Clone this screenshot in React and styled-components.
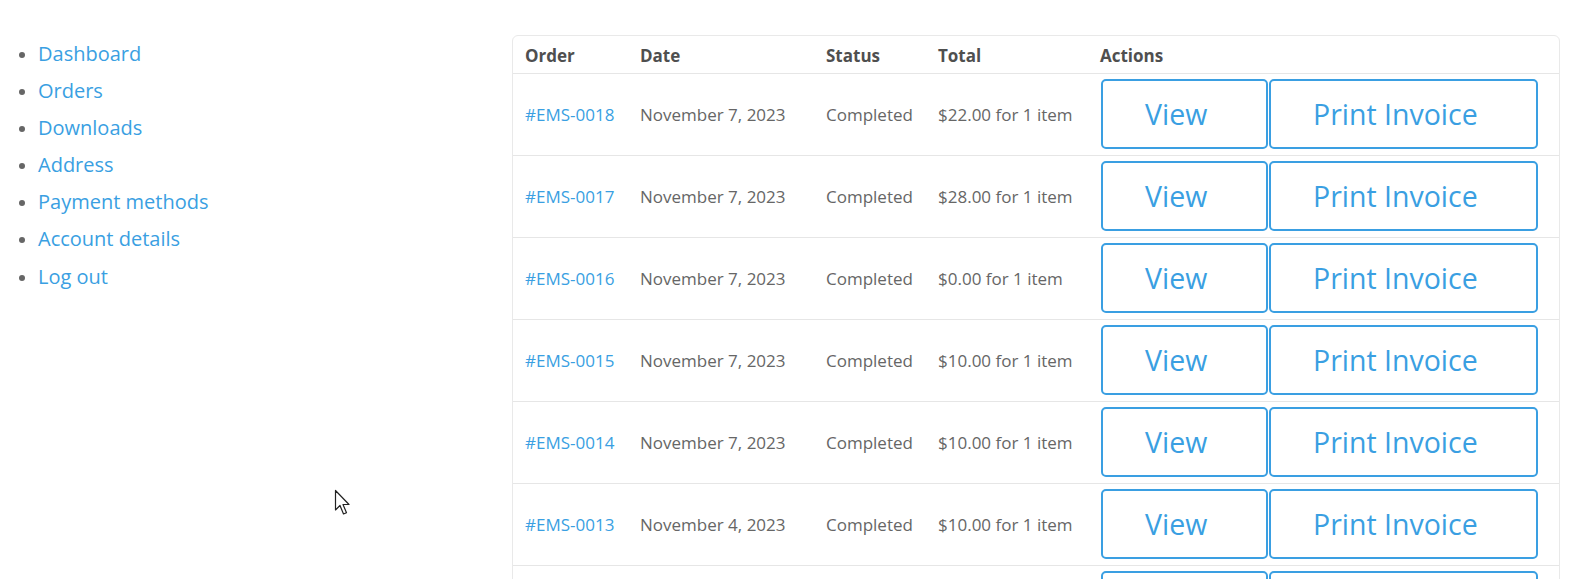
import React from 'react';
import styled, { createGlobalStyle } from 'styled-components';

const GlobalStyle = createGlobalStyle`
  html, body {
    margin: 0;
    padding: 0;
    background: #fff;
    font-family: "Open Sans", "Liberation Sans", sans-serif;
  }
`;

const Page = styled.div`
  position: relative;
  display: flex;
  align-items: flex-start;
  padding-top: 35px;
  height: 544px;
  overflow: hidden;
`;

const Nav = styled.ul`
  flex: 0 0 474px;
  margin: 0;
  padding: 0 0 0 38px;
  list-style: disc;
  color: #666;
  font-size: 20px;
  line-height: 37.1px;
`;

const NavItem = styled.li`
  &::marker {
    font-size: 17px;
  }
`;

const Link = styled.a`
  color: #3a9fe2;
  text-decoration: none;
`;

const TableWrap = styled.div`
  flex: 0 0 1048px;
  box-sizing: border-box;
  border: 1px solid #e9e9e9;
  border-radius: 6px;
  overflow: hidden;
`;

const Table = styled.table`
  width: 100%;
  border-collapse: collapse;
  table-layout: fixed;
`;

const Th = styled.th`
  box-sizing: border-box;
  width: ${p => (p.w ? `${p.w}px` : 'auto')};
  text-align: left;
  font-size: 17px;
  font-weight: 700;
  color: #4f4f4f;
  padding: 9px 12px 7px;
  line-height: 21px;
  border-bottom: 1px solid #e6e6e6;
  white-space: nowrap;
`;

const Tr = styled.tr`
  border-bottom: 1px solid #e6e6e6;
`;

const Td = styled.td`
  font-size: 17px;
  color: #666;
  padding: 5px 12px 6px ${p => (p.actions ? 13 : 12)}px;
  height: 70px;
  vertical-align: middle;
  white-space: nowrap;
`;

const OrderLink = styled.a`
  color: #3a9fe2;
  text-decoration: none;
`;

const Actions = styled.div`
  display: flex;
  gap: 1px;
`;

const Button = styled.a`
  display: inline-flex;
  align-items: center;
  justify-content: flex-start;
  box-sizing: border-box;
  flex: 0 0 ${p => p.w}px;
  height: 70px;
  padding-left: 42px;
  border: 2px solid #3a9fe2;
  border-radius: 5px;
  color: #3a9fe2;
  font-size: 28.5px;
  text-decoration: none;
  background: #fff;
`;

const Cursor = styled.svg`
  position: absolute;
  left: 334px;
  top: 489px;
`;

const navItems = ['Dashboard', 'Orders', 'Downloads', 'Address', 'Payment methods', 'Account details', 'Log out'];

const orders = [
  { id: '#EMS-0018', date: 'November 7, 2023', total: '$22.00 for 1 item' },
  { id: '#EMS-0017', date: 'November 7, 2023', total: '$28.00 for 1 item' },
  { id: '#EMS-0016', date: 'November 7, 2023', total: '$0.00 for 1 item' },
  { id: '#EMS-0015', date: 'November 7, 2023', total: '$10.00 for 1 item' },
  { id: '#EMS-0014', date: 'November 7, 2023', total: '$10.00 for 1 item' },
  { id: '#EMS-0013', date: 'November 4, 2023', total: '$10.00 for 1 item' },
  { id: '#EMS-0012', date: 'November 4, 2023', total: '$10.00 for 1 item' },
];

export default function App() {
  return (
    <Page>
      <GlobalStyle />
      <Nav>
        {navItems.map(item => (
          <NavItem key={item}><Link href="#">{item}</Link></NavItem>
        ))}
      </Nav>
      <TableWrap>
        <Table>
          <thead>
            <tr>
              <Th w={115}>Order</Th>
              <Th w={186}>Date</Th>
              <Th w={112}>Status</Th>
              <Th w={162}>Total</Th>
              <Th>Actions</Th>
            </tr>
          </thead>
          <tbody>
            {orders.map(o => (
              <Tr key={o.id}>
                <Td><OrderLink href="#">{o.id}</OrderLink></Td>
                <Td>{o.date}</Td>
                <Td>Completed</Td>
                <Td>{o.total}</Td>
                <Td actions>
                  <Actions>
                    <Button href="#" w={167}>View</Button>
                    <Button href="#" w={269}>Print Invoice</Button>
                  </Actions>
                </Td>
              </Tr>
            ))}
          </tbody>
        </Table>
      </TableWrap>
      <Cursor width="20" height="30" viewBox="0 0 20 30">
        <path d="M1.5 1.5 L1.5 21 L6 16.5 L9.5 25 L12.5 23.7 L9 15.5 L15 15.5 Z" fill="#fff" stroke="#222" strokeWidth="1.2" strokeLinejoin="round" />
      </Cursor>
    </Page>
  );
}
